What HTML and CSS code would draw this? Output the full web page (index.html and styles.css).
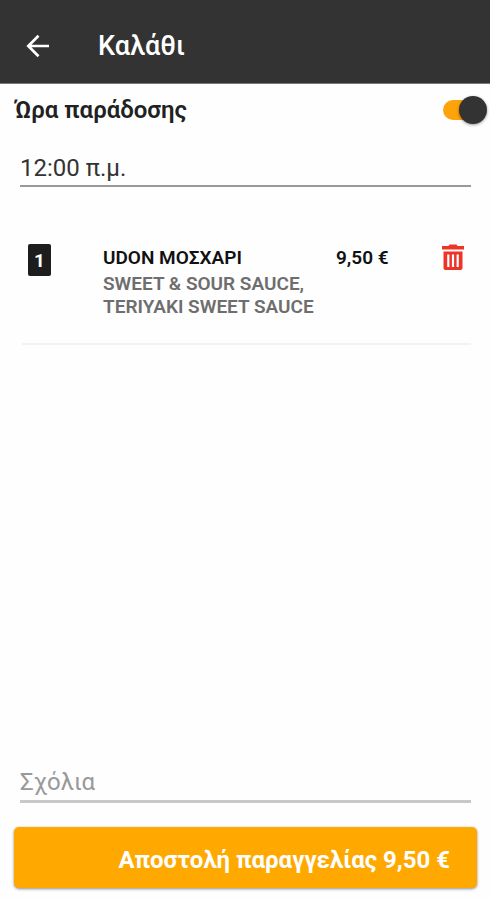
FILE: index.html
```html
<!DOCTYPE html>
<html lang="el">
<head>
<meta charset="utf-8">
<meta name="viewport" content="width=device-width, initial-scale=1">
<title>Καλάθι</title>
<link rel="stylesheet" href="styles.css">
</head>
<body>
<header class="app-bar">
  <button class="icon-button back" type="button" aria-label="Πίσω">
    <svg width="24" height="24" viewBox="0 0 24 24" fill="none" stroke="currentColor" stroke-width="2.7"><path d="M23 12H2.500M12.500 1.800L2.300 12l10.200 10.200"/></svg>
  </button>
  <h1 class="title">Καλάθι</h1>
</header>
<main class="cart">
  <div class="delivery">
    <label class="delivery-label" for="scheduled">Ώρα παράδοσης</label>
    <input class="switch" id="scheduled" type="checkbox" role="switch" checked>
  </div>
  <input class="field time" type="text" value="12:00 π.μ." aria-label="Ώρα">
  <ul class="items">
    <li class="item">
      <span class="quantity">1</span>
      <div class="details">
        <h2 class="name">UDON ΜΟΣΧΑΡΙ</h2>
        <p class="extras">SWEET &amp; SOUR SAUCE, TERIYAKI SWEET SAUCE</p>
      </div>
      <span class="price">9,50 €</span>
      <button class="icon-button remove" type="button" aria-label="Διαγραφή">
        <svg width="22" height="26" viewBox="0 0 22 26"><path fill="currentColor" d="M7.500 0.500h7L15.500 2H22v3.500H0V2h6.500z"/><path fill="currentColor" fill-rule="evenodd" d="M1.500 7.500h19V24a2 2 0 0 1-2 2h-15a2 2 0 0 1-2-2zM5.200 10.500v12.500h2.200V10.500zM9.900 10.500v12.500h2.200V10.500zM14.600 10.500v12.500h2.200V10.500z"/></svg>
      </button>
    </li>
  </ul>
</main>
<footer class="checkout">
  <input class="field comments" type="text" placeholder="Σχόλια" aria-label="Σχόλια">
  <button class="submit" type="button">Αποστολή παραγγελίας 9,50 €</button>
</footer>
</body>
</html>
```
FILE: styles.css
```css
* {
  box-sizing: border-box;
}

body {
  display: flex;
  flex-direction: column;
  min-height: 100vh;
  margin: 0;
  background: #fefefe;
  color: #212121;
  font-family: Roboto, "Noto Sans", sans-serif;
}

h1,
h2,
p,
ul {
  margin: 0;
  padding: 0;
}

.icon-button {
  display: flex;
  padding: 0;
  border: 0;
  background: none;
}

.app-bar {
  display: flex;
  align-items: center;
  gap: 48px;
  height: 84px;
  padding: 9px 26px 0;
  border-bottom: 1px solid #777;
  background: #333;
  color: #fff;
}

.back {
  color: #fff;
}

.title {
  font-size: 27px;
  font-weight: 500;
  line-height: 34px;
}

.cart {
  flex: 1;
}

.delivery {
  display: flex;
  align-items: center;
  justify-content: space-between;
  height: 52px;
  padding: 0 7px 0 15px;
}

.delivery-label {
  font-size: 24px;
  font-weight: 600;
  line-height: 32px;
}

.switch {
  position: relative;
  width: 40px;
  height: 20px;
  margin: 0;
  border-radius: 10px;
  background: #bbb;
  appearance: none;
}

.switch::before {
  position: absolute;
  top: -4px;
  left: -4px;
  width: 28px;
  height: 28px;
  border-radius: 50%;
  background: #333;
  box-shadow: 0 1px 3px rgb(0 0 0 / 40%);
  content: "";
}

.switch:checked {
  background: #ffa30a;
}

.switch:checked::before {
  left: 16px;
}

.field {
  display: block;
  width: calc(100% - 39px);
  margin: 0 19px 0 20px;
  padding: 0;
  border: 0;
  background: none;
  color: #333;
  font: 400 24px/32px Roboto, "Noto Sans", sans-serif;
}

.time {
  height: 37px;
  margin-top: 14px;
  border-bottom: 2px solid #999;
}

.items {
  margin: 57px 19px 0 22px;
  list-style: none;
}

.item {
  display: grid;
  grid-template-columns: 75px 1fr 106px 22px;
  align-items: start;
  min-height: 101px;
  padding: 0 7px 0 6px;
  border-bottom: 2px solid #f3f3f3;
}

.quantity {
  width: 23px;
  height: 32px;
  border-radius: 2px;
  background: #1d1d1d;
  color: #fff;
  font-size: 19px;
  font-weight: 700;
  line-height: 33px;
  text-align: center;
}

.name {
  color: #111;
  font-size: 19px;
  font-weight: 600;
  line-height: 28px;
}

.extras {
  max-width: 220px;
  color: #6e6e6e;
  font-size: 19px;
  font-weight: 600;
  line-height: 23px;
}

.price {
  color: #111;
  font-size: 19px;
  font-weight: 600;
  line-height: 28px;
}

.remove {
  color: #ed3429;
}

.checkout {
  padding-bottom: 12px;
}

.comments {
  height: 40px;
  border-bottom: 3px solid #c8c8c8;
}

.comments::placeholder {
  color: #999;
  opacity: 1;
}

.submit {
  display: block;
  width: calc(100% - 27px);
  height: 61px;
  margin: 24px 13px 0 14px;
  padding: 4px 27px 0;
  border: 0;
  border-radius: 5px;
  background: #ffa800;
  box-shadow: 0 1px 3px rgb(0 0 0 / 45%);
  color: #fff;
  font: 700 24px/32px Roboto, "Noto Sans", sans-serif;
  text-align: right;
}
```
